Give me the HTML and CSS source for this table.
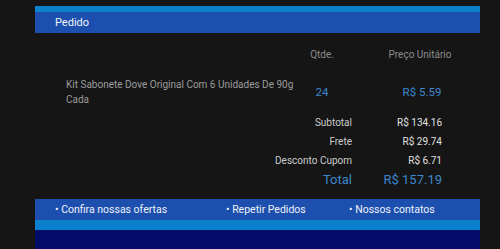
FILE: index.html
```html
<!doctype html>
<html>
<head>
<meta charset="utf-8">
<title>Pedido</title>
<link rel="stylesheet" href="styles.css">
</head>
<body>
	<div class="order">
		<div class="order_strip"></div>
		<div class="order_head">Pedido</div>
		<div class="order_body">
			<div class="col_head qty">Qtde.</div>
			<div class="col_head price">Preço Unitário</div>

			<div class="item_name">Kit Sabonete Dove Original Com 6 Unidades De 90g Cada</div>
			<div class="item_qty">24</div>
			<div class="item_price">R$ 5.59</div>

			<div class="sum_label first">Subtotal</div>
			<div class="sum_value first">R$ 134.16</div>
			<div class="sum_label">Frete</div>
			<div class="sum_value">R$ 29.74</div>
			<div class="sum_label">Desconto Cupom</div>
			<div class="sum_value">R$ 6.71</div>
			<div class="sum_label total">Total</div>
			<div class="sum_value total">R$ 157.19</div>
		</div>
		<div class="order_links">
			<a href="#" class="link_offers">• Confira nossas ofertas</a>
			<a href="#" class="link_repeat">• Repetir Pedidos</a>
			<a href="#">• Nossos contatos</a>
		</div>
		<div class="order_strip bottom_strip"></div>
		<div class="order_foot"></div>
	</div>
</body>
</html>
```

FILE: styles.css
```css
* {margin: 0; padding: 0;}
body {
	background: #151515;
	font-family: Roboto, "Liberation Sans", sans-serif;
	padding: 6px 0 0 35px;
}
.order {
	width: 445px;
}
.order_strip {
	height: 6px;
	background: #0b80cc;
}
.order_head {
	height: 21px;
	line-height: 21px;
	padding-left: 20px;
	background: #1c4fae;
	color: #f2f5fb;
	font-size: 11px;
}
.order_body {
	display: grid;
	grid-template-columns: 234px 52px 136px;
	padding: 14px 0 10px 31px;
	font-size: 10px;
	line-height: 15px;
}
.col_head {
	color: #8c8c8c;
	text-align: center;
	margin-bottom: 15px;
}
.qty {grid-column: 2; padding-right: 8px;}
.price {grid-column: 3;}
.item_name {
	grid-column: 1;
	color: #9c9c9c;
}
.item_qty,
.item_price {
	align-self: center;
	text-align: center;
	color: #3c87cd;
	font-size: 11.5px;
}
.item_qty {padding-right: 8px;}
.item_price {padding-left: 4px;}
.sum_label {
	grid-column: 1 / 3;
	text-align: right;
	line-height: 19px;
	color: #cccccc;
}
.sum_value {
	grid-column: 3;
	text-align: right;
	padding-right: 46px;
	line-height: 19px;
	color: #e0e0e0;
}
.first {margin-top: 6px;}
.sum_label.total,
.sum_value.total {
	font-size: 13px;
	color: #3c87cd;
}
.order_links {
	display: flex;
	height: 21px;
	line-height: 21px;
	padding-left: 20px;
	background: #1c4fae;
	font-size: 10.5px;
}
.order_links a {
	color: #eef2fa;
	text-decoration: none;
}
.link_offers {width: 171px;}
.link_repeat {width: 123px;}
.bottom_strip {height: 10px;}
.order_foot {
	height: 19px;
	background: #020b68;
}
```
